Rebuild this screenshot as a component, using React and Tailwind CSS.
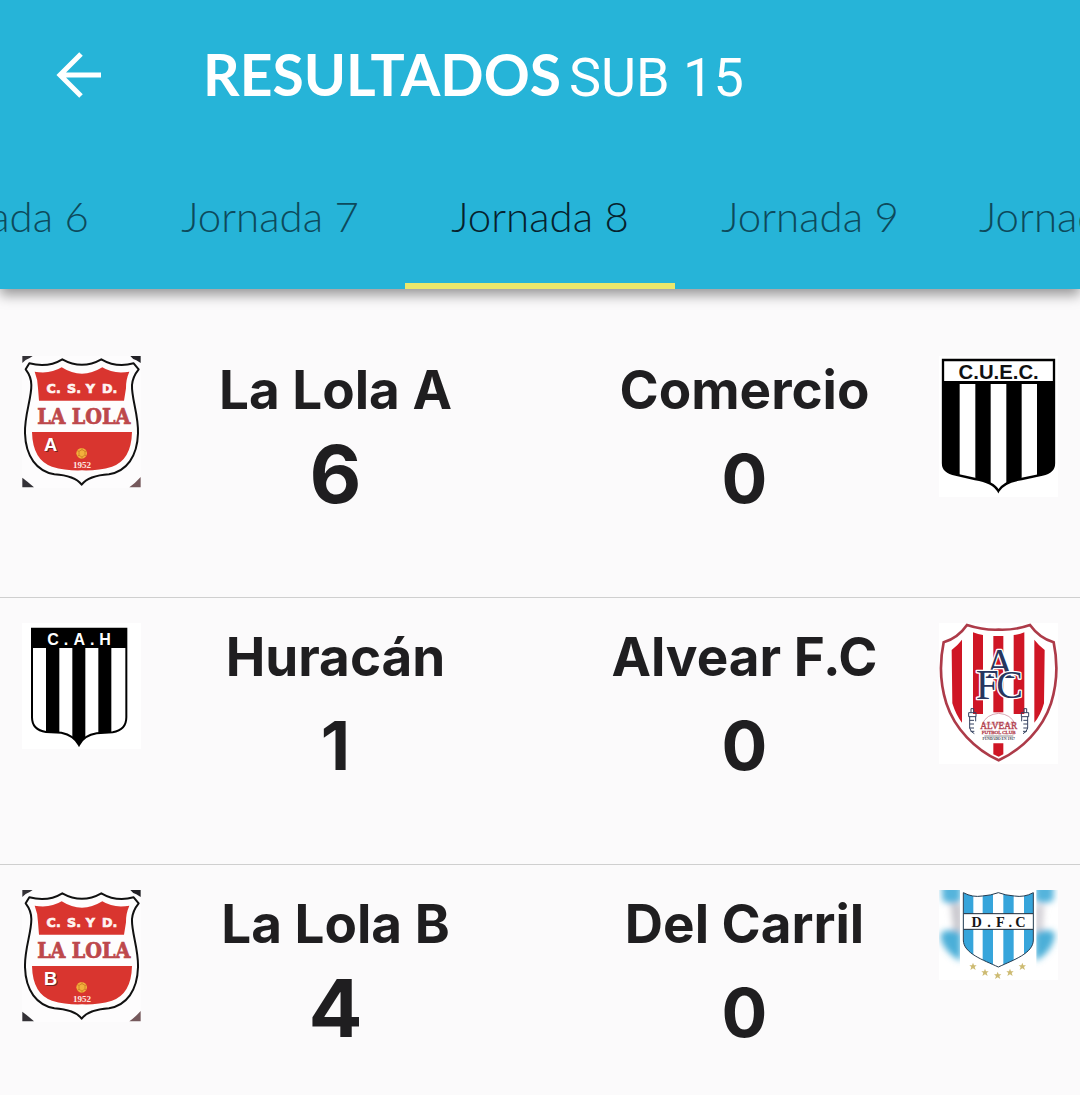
import { useState } from 'react';

function LaLolaCrest({ letter }) {
  return (
    <svg viewBox="36 33 357 396" className="block w-full" role="img" aria-label={`La Lola ${letter}`}>
      <rect x="36" y="33" width="357" height="396" fill="#fdfcfd" />
      <path d="M37 33H68Q58 41 47 45L37 54Z" fill="#333136" />
      <path d="M361 33H392V54L379 46Q367 42 361 33Z" fill="#222126" />
      <path d="M37 398Q52 409 72 427H37Z" fill="#333136" />
      <path d="M392 396V427H358Q376 414 392 396Z" fill="#75595c" />
      <path
        d="M58 55Q113 70 157 43Q216 76 274 43Q320 70 371 55L386 73Q368 95 366 120C364 160 386 210 384 265C382 335 350 378 297 388Q236 392 215 419Q194 392 133 388C80 378 47 335 45 265C43 210 65 160 64 120Q64 95 47 73Z"
        fill="#fefdfd"
        stroke="#111"
        strokeWidth="6"
        strokeLinejoin="round"
      />
      <path d="M74 80Q121 88 155 67Q185 86 216 86Q246 86 277 67Q310 88 358 80Q347 105 348 130L342 167H87L84 130Q84 105 74 80Z" fill="#d9352f" />
      <path d="M66 261H366Q364 345 306 365Q262 378 216 376Q170 378 126 365Q68 345 66 261Z" fill="#d9352f" />
      <g textAnchor="middle" fontWeight="700">
        <g fill="#fff4f0" stroke="#fff4f0" strokeWidth="2" fontSize="38" fontFamily="'DejaVu Sans', sans-serif">
          <text x="131" y="145">C.</text>
          <text x="192" y="145">S.</text>
          <text x="241" y="145">Y</text>
          <text x="299" y="145">D.</text>
        </g>
        <g fill="#bd484b" stroke="#bd484b" strokeWidth="2" fontSize="64" fontFamily="'DejaVu Serif Condensed', 'DejaVu Serif', serif">
          <text x="124" y="237">LA</text>
          <text x="273" y="237">LOLA</text>
        </g>
        <text x="122" y="319" fill="#fff" fontSize="55" fontFamily="'Liberation Sans', sans-serif" className="[text-shadow:1px_1px_0_#6e2523]">{letter}</text>
        <text x="216" y="369" fill="#ffe9e2" fontSize="27" fontFamily="'Liberation Serif', serif">1952</text>
      </g>
      <circle cx="215" cy="325" r="16" fill="#f2b03c" />
      <path d="M207 319L216 314L225 319V330L216 336L207 331ZM201 317L207 319M216 309V314M230 319L225 319M216 336V341M207 331L202 334M225 330L229 334" fill="none" stroke="#c4701f" strokeWidth="2" />
    </svg>
  );
}

function ComercioCrest() {
  const shield = 'M54 45H387V355Q387 382 352 389L290 402Q235 411 220 438Q205 411 150 402L92 389Q54 382 54 355Z';
  return (
    <svg viewBox="42 33 357 423" className="block w-full" role="img" aria-label="Comercio">
      <rect x="42" y="33" width="357" height="423" fill="#fff" />
      <clipPath id="comercio-shield"><path d={shield} /></clipPath>
      <g clipPath="url(#comercio-shield)">
        <rect x="54" y="45" width="333" height="400" fill="#000" />
        <rect x="57" y="48" width="327" height="60" fill="#fff" />
        <path d="M104 117H151V410H104ZM197 117H244V450H197ZM290 117H336V410H290Z" fill="#fff" />
      </g>
      <path d={shield} fill="none" stroke="#000" strokeWidth="7" />
      <text x="221" y="101" textAnchor="middle" fontFamily="'Liberation Sans', sans-serif" fontWeight="700" fontSize="61" fill="#111">C.U.E.C.</text>
    </svg>
  );
}

function HuracanCrest() {
  const shield = 'M66 56H349V322Q349 360 308 367L260 370Q222 376 207 405Q192 376 154 368L108 366Q66 360 66 322Z';
  return (
    <svg viewBox="36 39 357 378" className="block w-full" role="img" aria-label="Huracán">
      <rect x="36" y="39" width="357" height="378" fill="#fff" />
      <clipPath id="huracan-shield"><path d={shield} /></clipPath>
      <g clipPath="url(#huracan-shield)">
        <rect x="64" y="54" width="287" height="60" fill="#000" />
        <path d="M108 110H148V410H108ZM187 110H226V410H187ZM265 110H304V410H265Z" fill="#000" />
      </g>
      <path d={shield} fill="none" stroke="#000" strokeWidth="6" />
      <g textAnchor="middle" fontFamily="'Liberation Sans', sans-serif" fontWeight="700" fontSize="48" fill="#fff">
        <text x="129" y="104">C</text>
        <text x="168" y="104">.</text>
        <text x="208" y="104">A</text>
        <text x="247" y="104">.</text>
        <text x="285" y="104">H</text>
      </g>
    </svg>
  );
}

function AlvearCrest() {
  return (
    <svg viewBox="42 39 357 423" className="block w-full" role="img" aria-label="Alvear F.C">
      <rect x="42" y="39" width="357" height="423" fill="#fff" />
      <path
        d="M126 45Q175 61 221 59Q269 61 315 45Q343 84 386 97C398 155 397 220 378 280C353 356 291 419 221 451C151 419 89 356 64 280C45 220 44 155 56 97Q99 84 126 45Z"
        fill="#fff"
        stroke="#ad3b49"
        strokeWidth="8"
      />
      <g fill="#cf1625">
        <path d="M111 89V338Q94 318 82 280L80 120Q98 106 111 89Z" />
        <path d="M144 67Q160 74 174 75V312H144Z" />
        <path d="M205 78H235V307H205Z" />
        <path d="M266 75Q284 73 298 67V312H266Z" />
        <path d="M328 89Q341 106 359 120L357 280Q346 318 328 338Z" />
        <path d="M205 400H235V433L221 440L205 433Z" />
      </g>
      <path d="M172 342Q184 313 221 310Q258 313 270 342Z" fill="#fff" stroke="#c6788c" strokeWidth="2" />
      <g fontFamily="'Liberation Serif', serif" textAnchor="middle">
        <g fill="#27365f" stroke="#fff" strokeWidth="8" strokeLinejoin="round" className="[paint-order:stroke]">
          <text x="224" y="203" fontSize="124">A</text>
          <text x="187" y="267" fontSize="124">F</text>
          <text x="254" y="263" fontSize="120">C</text>
        </g>
        <text x="221" y="356" fontSize="28" fill="#b34250" stroke="#b34250">ALVEAR</text>
        <text x="221" y="372" fontSize="15" fill="#b34250" stroke="#b34250">FUTBOL CLUB</text>
        <text x="221" y="391" fontSize="11" fontWeight="700" fill="#3b3c4c">FUNDADO EN 1917</text>
      </g>
      <path d="M178 378H265" stroke="#555" strokeWidth="2" />
      <g fill="none" stroke="#34415f" strokeWidth="3">
        <path d="M131 308H153V320H131ZM138 308V296H146V308M134 320V354Q137 367 148 371M152 320V334M134 331H147M134 342H147M134 354H147M137 364H148" />
        <path d="M289 308H311V320H289ZM297 308V296H305V308M308 320V354Q305 367 294 371M290 320V334M295 331H308M295 342H308M295 354H308M294 364H305" />
      </g>
    </svg>
  );
}

const STAR = 'M0 -12L3 -4L11 -4L5 1L8 10L0 5L-8 10L-5 1L-11 -4L-3 -4Z';

function DelCarrilCrest() {
  const shield = 'M115 38Q143 53 172 48Q199 46 220 38Q241 46 268 48Q297 53 325 38V180C325 220 265 240 220 261C175 240 115 220 115 180Z';
  return (
    <svg viewBox="42 30 357 270" className="block w-full" role="img" aria-label="Del Carril">
      <defs>
        <clipPath id="carril-shield"><path d={shield} /></clipPath>
        <filter id="carril-soft" x="-30%" y="-30%" width="160%" height="160%"><feGaussianBlur stdDeviation="9" /></filter>
      </defs>
      <rect x="42" y="30" width="357" height="270" fill="#fff" />
      <g filter="url(#carril-soft)">
        <path d="M50 10H108V64Q80 78 52 62Z" fill="#54b4dc" />
        <path d="M76 72H112V155H86Z" fill="#c9c8ce" />
        <path d="M48 158Q70 143 108 156V244Q64 222 48 180Z" fill="#4bafd8" />
        <path d="M330 10H386V60Q360 78 330 62Z" fill="#54b4dc" />
        <path d="M330 75H357L352 155H330Z" fill="#d1cfd5" />
        <path d="M330 156Q370 143 390 160Q386 214 330 244Z" fill="#4bafd8" />
      </g>
      <rect x="105" y="30" width="229" height="270" fill="#fff" />
      <path d={shield} fill="#fff" />
      <g clipPath="url(#carril-shield)">
        <path d="M115 30H145V270H115ZM173 30H204V270H173ZM235 30H266V270H235ZM297 30H325V270H297Z" fill="#37a5db" />
        <rect x="112" y="101" width="216" height="47" fill="#fff" stroke="#222c38" strokeWidth="3" />
      </g>
      <path d={shield} fill="none" stroke="#233b50" strokeWidth="3" />
      <g textAnchor="middle" fontFamily="'Liberation Serif', serif" fontWeight="700" fontSize="43" fill="#161616">
        <text x="155" y="140">D</text>
        <text x="192" y="140">.</text>
        <text x="226" y="140">F</text>
        <text x="256" y="140">.</text>
        <text x="286" y="140">C</text>
      </g>
      <g fill="#cdbb72">
        <path d={STAR} transform="translate(144 260)" />
        <path d={STAR} transform="translate(180 278)" />
        <path d={STAR} transform="translate(218 287)" />
        <path d={STAR} transform="translate(255 278)" />
        <path d={STAR} transform="translate(292 260)" />
      </g>
    </svg>
  );
}

function Team({ name, score, tall }) {
  return (
    <div className="flex min-w-0 flex-1 flex-col items-center">
      <h2 className="h-[68px] whitespace-nowrap font-['Inter'] text-[53px] font-bold leading-[68px]">{name}</h2>
      <p className={`flex h-[92px] items-end font-['Inter'] font-bold ${tall ? 'text-[80px] leading-[84px]' : 'text-[68px] leading-[76px]'}`}>{score}</p>
    </div>
  );
}

function Match({ home, away }) {
  return (
    <li className="flex h-[267px] items-start border-b border-[#cfcfcf] px-[22px] pt-[25px] last:border-b-0">
      <div className="w-[119px] shrink-0">{home.crest}</div>
      <div className="flex min-w-0 flex-1 gap-5">
        <Team {...home} />
        <Team {...away} />
      </div>
      <div className="w-[119px] shrink-0">{away.crest}</div>
    </li>
  );
}

const MATCHES = [
  {
    home: { name: 'La Lola A', score: 6, tall: true, crest: <LaLolaCrest letter="A" /> },
    away: { name: 'Comercio', score: 0, crest: <ComercioCrest /> },
  },
  {
    home: { name: 'Huracán', score: 1, crest: <HuracanCrest /> },
    away: { name: 'Alvear F.C', score: 0, crest: <AlvearCrest /> },
  },
  {
    home: { name: 'La Lola B', score: 4, tall: true, crest: <LaLolaCrest letter="B" /> },
    away: { name: 'Del Carril', score: 0, crest: <DelCarrilCrest /> },
  },
];

const ROUNDS = [6, 7, 8, 9, 10];

export default function App() {
  const [round, setRound] = useState(8);
  return (
    <div className="min-h-screen overflow-hidden bg-[#fbfafb] text-[#1f1e20]">
      <header className="relative bg-[#26b4d8] shadow-[0_6px_12px_rgba(0,0,0,0.4)]">
        <div className="flex h-[150px] items-center pl-14 text-white">
          <button type="button" aria-label="Volver" className="mr-[101px]">
            <svg viewBox="0 0 46 46" className="block size-[46px]" fill="none" stroke="currentColor" strokeWidth="5">
              <path d="M45 23H4M25 2L4 23L25 44" />
            </svg>
          </button>
          <h1 className="flex items-baseline gap-2 whitespace-nowrap">
            <span className="font-['Lato'] text-[57px] font-bold">RESULTADOS</span>
            <span className="font-['Roboto'] text-[54px]">SUB 15</span>
          </h1>
        </div>
        <nav className="flex h-[139px] justify-center">
          {ROUNDS.map((n) => (
            <button
              key={n}
              type="button"
              aria-pressed={n === round}
              onClick={() => setRound(n)}
              className={`w-1/4 shrink-0 whitespace-nowrap border-b-[6px] font-['Lato'] text-[42px] font-light ${n === round ? 'border-[#ebe76c] text-[#06222e]' : 'border-transparent text-[#0d4a5c]'}`}
            >
              Jornada {n}
            </button>
          ))}
        </nav>
      </header>
      <main className="pt-[42px]">
        <ul>
          {MATCHES.map((m) => (
            <Match key={m.home.name} {...m} />
          ))}
        </ul>
      </main>
    </div>
  );
}
